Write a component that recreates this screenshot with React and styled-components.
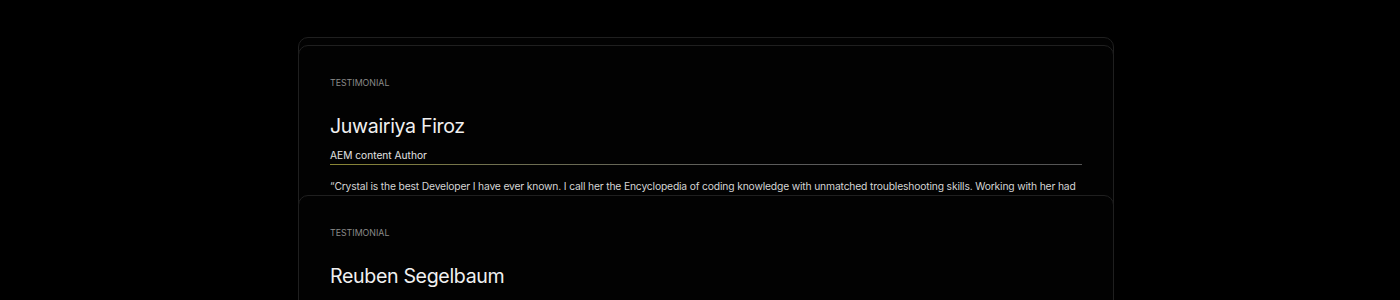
import React from "react";
import styled, { createGlobalStyle } from "styled-components";

const Global = createGlobalStyle`
  html, body { margin: 0; padding: 0; background: #000; }
  body { font-family: "Inter", "Noto Sans", sans-serif; color: #e6e6e6; overflow: hidden; }
`;

const Page = styled.div`
  height: 300px;
  overflow: hidden;
  padding-top: 37px;
  box-sizing: border-box;
`;

const Stack = styled.div`
  width: 816px;
  margin-left: 298px;
  display: flex;
  flex-direction: column;
`;

const Card = styled.section`
  position: relative;
  flex: none;
  box-sizing: border-box;
  min-height: 300px;
  margin-bottom: ${(p) => p.$overlap || 0}px;
  background: #020202;
  border: 1px solid #1f1f1f;
  border-radius: 10px;
  padding: 30px 31px 0;
`;

const Label = styled.div`
  font-size: 8.8px;
  text-transform: uppercase;
  color: #8a8a8a;
  line-height: 14px;
`;

const Name = styled.h3`
  margin: 23px 0 0;
  font-size: 19.6px;
  font-weight: 400;
  letter-spacing: -0.35px;
  line-height: 26px;
  color: #f0f0f0;
`;

const Role = styled.div`
  margin-top: 9px;
  font-size: 10.2px;
  line-height: 14px;
  color: #e2e2e2;
  padding-bottom: 2px;
  border-bottom: 1px solid transparent;
  border-image: linear-gradient(90deg, #8a8634 0%, #707050 22%, #5c5c5c 55%, #555 100%) 1;
`;

const Quote = styled.p`
  margin: 12px 0 0;
  font-size: 10.3px;
  letter-spacing: -0.16px;
  line-height: 18px;
  color: #d4d4d4;
`;

const items = [
  {
    name: "Juwairiya Firoz",
    role: "AEM content Author",
    quote:
      "“Crystal is the best Developer I have ever known. I call her the Encyclopedia of coding knowledge with unmatched troubleshooting skills. Working with her had been a great learning experience.”",
    overlap: -150,
  },
  {
    name: "Reuben Segelbaum",
    role: "Engineering Lead",
    quote: "“A thoughtful engineer and a generous teammate.”",
    overlap: 0,
  },
];

export default function App() {
  return (
    <>
      <Global />
      <Page>
        <Stack>
          <Card $overlap={-292} aria-hidden="true" />
          {items.map((t) => (
            <Card key={t.name} $overlap={t.overlap}>
              <Label>Testimonial</Label>
              <Name>{t.name}</Name>
              <Role>{t.role}</Role>
              <Quote>{t.quote}</Quote>
            </Card>
          ))}
        </Stack>
      </Page>
    </>
  );
}
